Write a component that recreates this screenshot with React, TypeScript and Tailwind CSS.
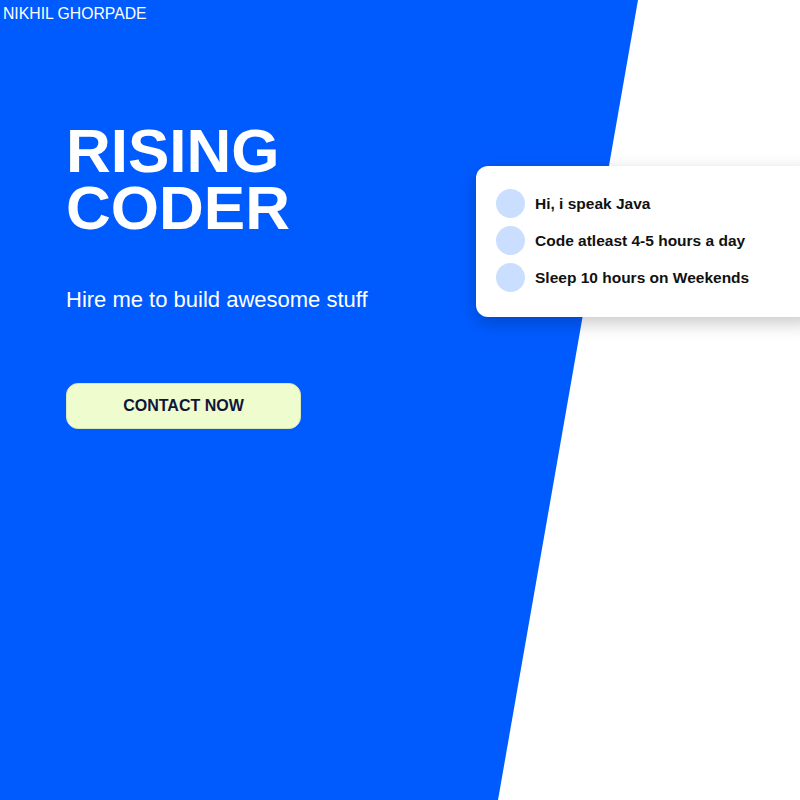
import { FC } from 'react';

const facts = ['Hi, i speak Java', 'Code atleast 4-5 hours a day', 'Sleep 10 hours on Weekends'];

const FactCard: FC = () => (
  <div className="w-[340px] shrink-0 rounded-xl bg-white pl-5 pt-[23px] pb-[25px] shadow-[0_6px_18px_rgba(0,0,0,0.22)]">
    <ul className="flex flex-col gap-2">
      {facts.map((fact) => (
        <li key={fact} className="flex items-center gap-[10px]">
          <span className="h-[29px] w-[29px] shrink-0 rounded-full bg-[#cadfff]" />
          <span className="text-[15.5px] font-bold text-[#111]">{fact}</span>
        </li>
      ))}
    </ul>
  </div>
);

export default function App() {
  return (
    <div className="grid h-[800px] w-full overflow-hidden bg-white font-['Liberation_Sans',Arial,sans-serif]">
      {/* blue slanted background */}
      <div className="col-start-1 row-start-1 bg-[#005bff] [clip-path:polygon(0_0,79.75%_0,62.25%_100%,0_100%)]" />

      <div className="relative z-10 col-start-1 row-start-1 flex flex-col">
        <header className="pl-[3px] pt-[4px] text-[15.75px] leading-5 text-white">NIKHIL GHORPADE</header>

        <main className="flex items-start justify-between">
          <section className="pl-[66px] pt-[98px]">
            <h1 className="text-[62px] font-bold leading-[57px] text-white">
              RISING
              <br />
              CODER
            </h1>
            <p className="mt-[47px] text-[22px] text-white">Hire me to build awesome stuff</p>
            <button className="mt-[67px] h-[46px] w-[235px] rounded-xl border border-[#d8e8b8] bg-[#effccd] text-[16px] font-bold text-[#10163a]">
              CONTACT NOW
            </button>
          </section>

          <div className="mt-[142px] -mr-[16px]">
            <FactCard />
          </div>
        </main>
      </div>
    </div>
  );
}
